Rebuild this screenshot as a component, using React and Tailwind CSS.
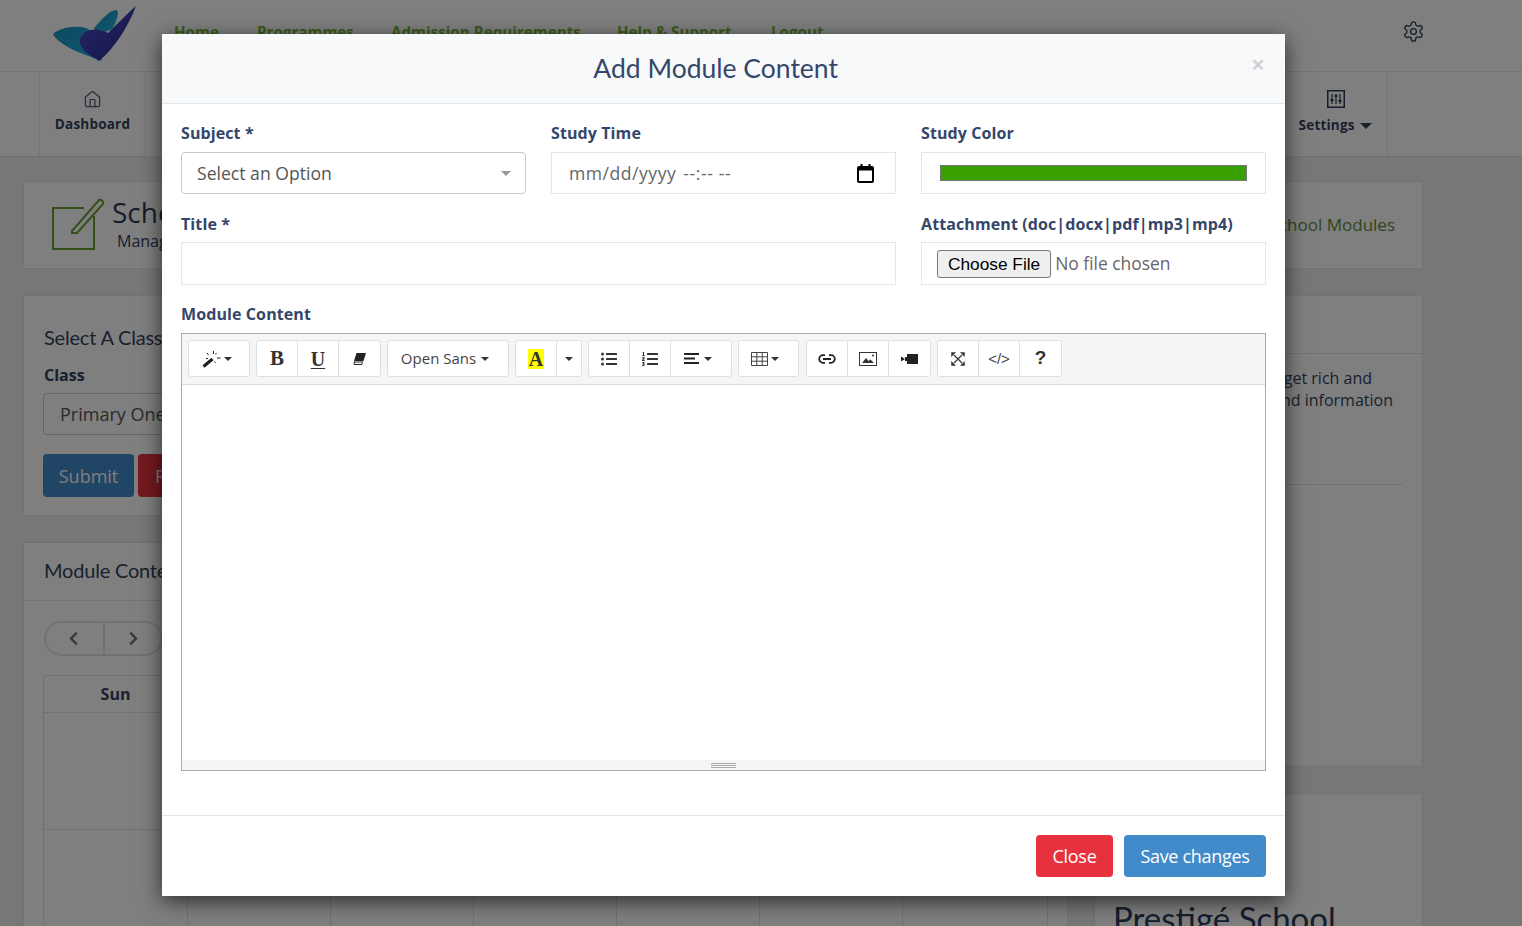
import { FaListUl, FaListOl, FaChevronLeft, FaChevronRight } from 'react-icons/fa';
import { LuHouse, LuSettings } from 'react-icons/lu';

const navLinks = [
    ['Home', 'w-[83px]'],
    ['Programmes', 'w-[134px]'],
    ['Admission Requirements', 'w-[226px]'],
    ['Help & Support', 'w-[154px]'],
    ['Logout', 'w-[60px]'],
];
const days = ['Sun', '', '', '', '', '', ''];

function Logo() {
    return (
        <svg width="90" height="62" viewBox="0 0 90 62" className="block">
            <defs>
                <linearGradient id="wing" x1="0" y1="0" x2="1" y2="1">
                    <stop offset="0" stopColor="#1d8fc0" />
                    <stop offset="1" stopColor="#23b4e4" />
                </linearGradient>
                <linearGradient id="heart" x1="0" y1="0" x2="1" y2="1">
                    <stop offset="0" stopColor="#4a4fd0" />
                    <stop offset="1" stopColor="#2a2a90" />
                </linearGradient>
            </defs>
            <path d="M1 33 C8 27 22 24 34 27 L44 32 L50 60 C34 54 8 46 1 33 Z" fill="url(#wing)" />
            <path d="M42 27 C50 18 58 9 64 9 C68 10 65 20 60 28 L46 34 Z" fill="url(#wing)" />
            <path d="M84 5 C76 26 62 48 47 60 C38 54 29 50 28 42 C27 32 38 27 47 29 C51 30 54 31 56 32 C66 22 76 12 84 5 Z" fill="url(#heart)" />
        </svg>
    );
}

function PageBehind() {
    return (
        <div className="h-[926px] overflow-hidden bg-[#eceeec] font-['Open_Sans',sans-serif] text-[#33415c]">
            <header className="flex h-[72px] items-start border-b border-[#e3e6ea] bg-white">
                <div className="ml-[52px] mt-[1px] w-[122px]"><Logo /></div>
                <nav className="mt-[21px] flex text-[15.200px] font-bold text-[#78b838]">
                    {navLinks.map(([label, width]) => (
                        <span key={label} className={`${width} whitespace-nowrap`}>{label}</span>
                    ))}
                </nav>
                <LuSettings className="ml-auto mr-[97px] mt-[20px] text-[#2c3a58]" size={23} strokeWidth={1.4} />
            </header>
            <div className="flex h-[85px] justify-between border-b border-[#dfe2e6] bg-white px-[39px] pr-[134px]">
                <div className="flex w-[107px] flex-col items-center border-x border-[#e3e6ea] pt-[18px]">
                    <LuHouse size={19} strokeWidth={1.5} className="text-[#4a5874]" />
                    <span className="mt-[5px] text-[13.500px] font-bold tracking-[0.2px]">Dashboard</span>
                </div>
                <div className="flex w-[107px] flex-col items-center border-r border-[#e3e6ea] pl-[3px] pt-[18px]">
                    <svg width="18" height="18" viewBox="0 0 18 18" fill="none" stroke="#2c3a58">
                        <rect x=".75" y=".75" width="16.500" height="16.500" strokeWidth="1.500" />
                        <path d="M5 4v10M9 4v10M13 4v10" strokeWidth="1.200" />
                        <path d="M3.500 10h3M7.500 6h3M11.500 11h3" strokeWidth="2" />
                    </svg>
                    <span className="mt-[7px] text-[13.500px] font-bold tracking-[0.2px]">Settings <span className="ml-[2px] inline-block border-x-[6px] border-t-[6px] border-x-transparent border-t-[#33415c] align-middle" /></span>
                </div>
            </div>
            <main className="pl-[23px] pr-[99px] pt-[24px]">
                <section className="flex h-[88px] items-center border border-[#e2e5e8] bg-white pl-[27px] pr-[27px]">
                    <svg width="54" height="54" viewBox="0 0 54 54" fill="none" stroke="#68a030" strokeWidth="2" className="shrink-0">
                        <path d="M43 18 V51 H2 V10 H33" />
                        <path d="M21 33 L48 2 C50 1 53 3 52 6 L26 35 L21 35 Z" />
                    </svg>
                    <div className="ml-[7px] mt-[-3px]">
                        <div className="text-[28px] leading-[34px] text-[#2c3a58]">School Modules</div>
                        <div className="ml-[5px] text-base">Manage School Modules</div>
                    </div>
                    <span className="ml-auto text-[17px] font-medium text-[#628a40]">School Modules</span>
                </section>
                <div className="mt-[26px] grid grid-cols-[1045px_329px] gap-x-[26px]">
                    <div className="space-y-[26px]">
                        <section className="h-[221px] border border-[#e2e5e8] bg-white px-[19px] pt-[27px]">
                            <h2 className="ml-[1px] font-['Lato',sans-serif] text-[20px] leading-[28px] tracking-[-0.2px]">Select A Class</h2>
                            <div className="ml-[1px] mt-[12px] text-base font-bold">Class</div>
                            <div className="mt-[6px] flex h-[42px] w-[400px] items-center rounded border border-[#c9cdd2] px-[16px] text-lg text-[#555]">Primary One</div>
                            <div className="mt-[19px] flex gap-[4px] text-lg text-white">
                                <span className="flex h-[43px] w-[91px] items-center justify-center rounded-sm bg-[#428bca]">Submit</span>
                                <span className="flex h-[43px] w-[91px] items-center rounded-sm bg-[#e6323e] pl-[17px]">Reset</span>
                            </div>
                        </section>
                        <section className="h-[400px] border border-[#e2e5e8] bg-white">
                            <h2 className="flex h-[58px] items-center border-b border-[#dfe2e6] pb-[4px] pl-[20px] font-['Lato',sans-serif] text-[20px] tracking-[-0.2px]">Module Content</h2>
                            <div className="ml-[20px] mt-[20px] flex h-[35px] w-[119px] items-center rounded-full border-2 border-[#dfe2e6] text-[#6b7280]">
                                <span className="flex h-full w-[59px] items-center justify-center border-r-2 border-[#dfe2e6] pr-[2px]"><FaChevronLeft size={15} /></span>
                                <span className="flex h-full flex-1 items-center justify-center"><FaChevronRight size={15} /></span>
                            </div>
                            <div className="ml-[19px] mt-[19px] w-[1005px] border border-[#dfe2e6]">
                                <div className="grid grid-cols-[144px_repeat(6,143px)] border-b border-[#dfe2e6]">
                                    {days.map((d, i) => (
                                        <div key={i} className="flex h-[36px] items-center justify-center border-r border-[#dfe2e6] text-base font-bold last:border-r-0">{d}</div>
                                    ))}
                                </div>
                                <div className="grid h-[300px] grid-cols-[144px_repeat(6,143px)]">
                                    {days.map((d, i) => (
                                        <div key={i} className="border-r border-[#dfe2e6] last:border-r-0"><div className="h-[117px] border-b border-[#dfe2e6]" /></div>
                                    ))}
                                </div>
                            </div>
                        </section>
                    </div>
                    <div className="space-y-[26px]">
                        <section className="h-[472px] border border-[#e2e5e8] bg-white">
                            <div className="h-[58px] border-b border-[#dfe2e6]" />
                            <div className="whitespace-nowrap pt-[13px] text-right text-base leading-[22px]">
                                <div className="pr-[50px]">get rich and</div>
                                <div className="pr-[29px]">and information</div>
                            </div>
                            <div className="mx-[19px] mt-[73px] border-b border-[#dfe2e6]" />
                        </section>
                        <section className="h-[200px] border border-[#e2e5e8] bg-white pl-[18px] pt-[106px]">
                            <div className="whitespace-nowrap font-['Lato',sans-serif] text-[33px] leading-[36px] text-[#2c3a58]">Prestigé School</div>
                        </section>
                    </div>
                </div>
            </main>
        </div>
    );
}

function Caret({ className = '' }) {
    return <span className={`inline-block border-x-[4px] border-t-[4px] border-x-transparent border-t-[#333] ${className}`} />;
}

function ToolGroup({ children }) {
    return <div className="flex h-[37px] divide-x divide-[#dae0e5] rounded-[3px] border border-[#dae0e5] bg-white text-[#333]">{children}</div>;
}

function Tool({ width = 'w-[41px]', children }) {
    return <div className={`flex ${width} items-center justify-center`}>{children}</div>;
}

function Toolbar() {
    return (
        <div className="flex h-[51px] items-start gap-[6px] border-b border-[#dedede] bg-[#f5f5f5] pl-[6px] pt-[6px]">
            <ToolGroup>
                <Tool width="w-[60px]">
                    <div className="flex items-center pr-[4px]">
                        <svg width="20" height="18" viewBox="0 0 20 18" fill="none" stroke="#222">
                            <path d="M1.500 16.500L10.500 9" strokeWidth="3.200" />
                            <path d="M11.500 1v3M5 3l1.500 2M14.500 3l-1 1.500M15 8h3.500M12.500 11.500l1 1.500M6 8.500H4" strokeWidth="1" />
                        </svg>
                        <Caret className="ml-[2px]" />
                    </div>
                </Tool>
            </ToolGroup>
            <ToolGroup>
                <Tool><span className="font-['Liberation_Serif',serif] text-[21px] font-bold">B</span></Tool>
                <Tool><span className="font-['Liberation_Serif',serif] text-[20px] font-bold underline decoration-1 underline-offset-2">U</span></Tool>
                <Tool>
                    <svg width="13" height="12" viewBox="0 0 13 12" fill="#222">
                        <path d="M3.500 0H13L10.500 8H1z" />
                        <path d="M1 8.500h9L9.200 12H1.800a1.200 1.200 0 0 1-1.100-1.600zM2 9.500l-.4 1.500h7l.4-1.500z" fillRule="evenodd" />
                    </svg>
                </Tool>
            </ToolGroup>
            <ToolGroup>
                <Tool width="w-[120px]"><div className="flex items-center pr-[6px]"><span className="text-[15px] text-[#444]">Open Sans</span><Caret className="ml-[5px]" /></div></Tool>
            </ToolGroup>
            <ToolGroup>
                <Tool><span className="bg-[#ffff00] px-[1px] font-['Liberation_Serif',serif] text-[20px] font-bold leading-[20px]">A</span></Tool>
                <Tool width="w-[24px]"><Caret /></Tool>
            </ToolGroup>
            <ToolGroup>
                <Tool><FaListUl size={16} /></Tool>
                <Tool><FaListOl size={16} /></Tool>
                <Tool width="w-[60px]">
                    <div className="flex items-center pr-[6px]">
                        <svg width="15" height="11" viewBox="0 0 15 11" fill="#222">
                            <path d="M0 0h15v2H0zM0 4.500h11v2H0zM0 9h15v2H0z" />
                        </svg>
                        <Caret className="ml-[5px]" />
                    </div>
                </Tool>
            </ToolGroup>
            <ToolGroup>
                <Tool width="w-[59px]">
                    <div className="flex items-center pr-[8px]">
                        <svg width="17" height="14" viewBox="0 0 17 14" fill="none" stroke="#444" strokeWidth="1">
                            <path d="M.5.5h16v13H.5zM.5 4.800h16M.5 9.200h16M5.800.5v13M11.200.5v13" />
                        </svg>
                        <Caret className="ml-[3px]" />
                    </div>
                </Tool>
            </ToolGroup>
            <div className="ml-[1px]">
                <ToolGroup>
                    <Tool>
                        <svg width="18" height="10" viewBox="0 0 18 10" fill="none" stroke="#222" strokeWidth="1.800">
                            <path d="M7 1.200H5a3.800 3.800 0 0 0 0 7.600h2M11 1.200h2a3.800 3.800 0 0 1 0 7.600h-2M5 5h8" />
                        </svg>
                    </Tool>
                    <Tool>
                        <svg width="18" height="14" viewBox="0 0 18 14">
                            <rect x=".5" y=".5" width="17" height="13" fill="none" stroke="#333" />
                            <path d="M3 11l4-5 2.500 3 2-1.500L15 11z" fill="#333" />
                            <circle cx="14" cy="3.500" r="1" fill="#333" />
                        </svg>
                    </Tool>
                    <Tool>
                        <svg width="17" height="10" viewBox="0 0 17 10" fill="#222">
                            <rect x="6" y="0" width="11" height="10" />
                            <path d="M0 2.500L4 5 0 7.500zM4 3h2v4H4z" />
                        </svg>
                    </Tool>
                </ToolGroup>
            </div>
            <ToolGroup>
                <Tool>
                    <svg width="14" height="14" viewBox="0 0 14 14" fill="#333" stroke="#333">
                        <path d="M3 3l8 8M11 3l-8 8" strokeWidth="1.200" fill="none" />
                        <path d="M.5.5h4L.5 4.500zM13.500.5v4l-4-4zM.5 13.500v-4l4 4zM13.500 13.500h-4l4-4z" strokeWidth=".5" />
                    </svg>
                </Tool>
                <Tool><span className="pt-[1px] font-['Liberation_Sans',sans-serif] text-[15px] text-[#444]">&lt;/&gt;</span></Tool>
                <Tool><span className="font-['Liberation_Sans',sans-serif] text-[19px] font-bold">?</span></Tool>
            </ToolGroup>
        </div>
    );
}

const label = 'block h-[19px] text-base font-bold leading-[19px] tracking-[0.1px] text-[#34466a]';
const field = 'block w-full border border-[#e4e7ea] bg-white';

function ModuleModal() {
    return (
        <div className="absolute inset-0 h-[926px] overflow-hidden bg-black/50 font-['Open_Sans',sans-serif]">
            <div className="absolute left-[162px] top-[34px] flex h-[862px] w-[1123px] flex-col bg-white shadow-[0_5px_20px_rgba(0,0,0,0.65)]">
                <div className="flex h-[70px] items-start border-b border-[#e4e7ea] bg-[#f8f9fb] pt-[17px]">
                    <h1 className="flex-1 pl-[18px] text-center font-['Lato',sans-serif] text-[26.500px] leading-[34px] text-[#34466a]">Add Module Content</h1>
                    <span className="mr-[20px] mt-[-4px] text-[24px] font-bold leading-[34px] text-[#cfd1d3]">×</span>
                </div>
                <div className="flex-1 px-[19px] pt-[20px]">
                    <div className="grid grid-cols-3 gap-x-[25px]">
                        <div className="h-[91px]">
                            <label className={label}>Subject *</label>
                            <div className="mt-[9px] flex h-[42px] items-center justify-between rounded border border-[#c8c8c8] pl-[15px] pr-[14px] text-[17.600px] text-[#555]">
                                Select an Option
                                <span className="border-x-[5px] border-t-[5px] border-x-transparent border-t-[#999]" />
                            </div>
                        </div>
                        <div>
                            <label className={label}>Study Time</label>
                            <div className={`${field} mt-[9px] flex h-[42px] items-center justify-between pl-[17px] pr-[21px] text-[17.600px] text-[#666]`}>
                                <span className="tracking-[0.5px]">mm/dd/yyyy<span className="ml-[7px] tracking-[0.6px]">--:-- --</span></span>
                                <svg width="17" height="19" viewBox="0 0 17 19" fill="none">
                                    <rect x="1" y="3" width="15" height="15" rx="1" stroke="#000" strokeWidth="2" />
                                    <path d="M1 3h15v3.500H1zM3.500 0h2v3h-2zM11.500 0h2v3h-2z" fill="#000" />
                                </svg>
                            </div>
                        </div>
                        <div>
                            <label className={label}>Study Color</label>
                            <div className={`${field} mt-[9px] flex h-[42px] items-center pl-[18px] pr-[18px]`}>
                                <span className="h-[16px] w-full border border-[#767676] bg-[#38a000]" />
                            </div>
                        </div>
                        <div className="col-span-2 h-[90px]">
                            <label className={label}>Title *</label>
                            <input type="text" className={`${field} mt-[8px] h-[43px]`} />
                        </div>
                        <div>
                            <label className={label}>Attachment (doc|docx|pdf|mp3|mp4)</label>
                            <input type="file" className={`${field} mt-[8px] h-[43px] py-[7px] pl-[15px] text-[17.400px] text-[#666] file:mr-[4px] file:h-[28px] file:rounded-[3px] file:border file:border-[#767676] file:bg-[#efefef] file:px-[10px] file:pt-[1px] file:font-['Liberation_Sans',sans-serif] file:text-[17.300px] file:text-black`} />
                        </div>
                    </div>
                    <label className={label}>Module Content</label>
                    <div className="mt-[9px] h-[438px] border border-[#a9a9a9]">
                        <Toolbar />
                        <div className="h-[375px] bg-white" />
                        <div className="flex h-[10px] flex-col items-center justify-center gap-[1px] bg-[#f5f5f5]">
                            <span className="h-px w-[25px] bg-[#a9a9a9]" />
                            <span className="h-px w-[25px] bg-[#a9a9a9]" />
                            <span className="h-px w-[25px] bg-[#a9a9a9]" />
                        </div>
                    </div>
                </div>
                <div className="flex h-[81px] items-start justify-end gap-[11px] border-t border-[#e4e7ea] pr-[19px] pt-[19px] text-lg tracking-[-0.3px] text-white">
                    <button className="h-[42px] w-[77px] rounded-sm bg-[#e6323e]">Close</button>
                    <button className="h-[42px] w-[142px] rounded-sm bg-[#428bca]">Save changes</button>
                </div>
            </div>
        </div>
    );
}

export default function App() {
    return (
        <div className="relative h-[926px] overflow-hidden">
            <PageBehind />
            <ModuleModal />
        </div>
    );
}
